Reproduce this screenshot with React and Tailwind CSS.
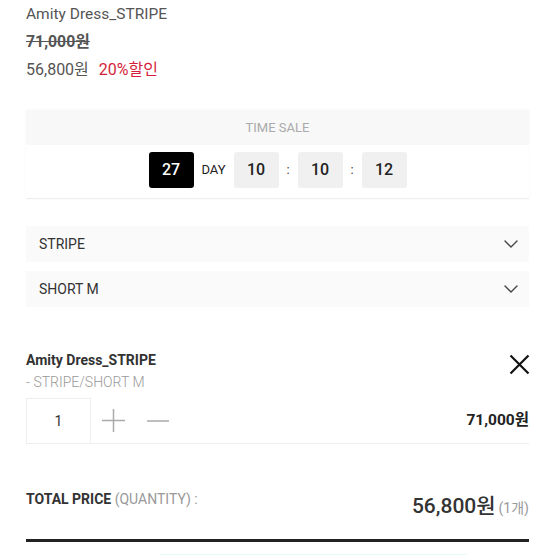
import React from "react";

const font = { fontFamily: 'Roboto, "Noto Sans CJK KR", sans-serif' };

function Chevron() {
  return (
    <svg width="14" height="8" viewBox="0 0 14 8" fill="none">
      <path d="M1 1l6 6 6-6" stroke="#444" strokeWidth="1.4" strokeLinecap="round" strokeLinejoin="round" />
    </svg>
  );
}

export default function App() {
  return (
    <div className="w-[555px] h-[555px] overflow-hidden bg-white pl-[26px] pr-[26px] text-[#333]" style={font}>
      <div className="mt-[4px] h-[20px] text-[15.5px] leading-[20px] text-[#555]">Amity Dress_STRIPE</div>
      <div className="mt-[8px] h-[20px] text-[15.8px] leading-[20px] font-bold text-[#555] line-through">71,000원</div>
      <div className="mt-[8px] h-[20px] text-[16px] leading-[20px] text-[#555] flex">
        <span>56,800원</span>
        <span className="ml-[10px] text-[#d41f3c]">20%할인</span>
      </div>

      <div className="mt-[30px] border-b border-[#eee] shadow-[0_0_3px_rgba(0,0,0,0.04)]">
        <div className="h-[35px] bg-[#f8f8f8] flex items-center justify-center text-[13px] text-[#aaa]">TIME SALE</div>
        <div className="h-[53px] pt-[7px] flex justify-center">
          <div className="flex h-[36px] items-center">
            <div className="w-[45px] h-[36px] rounded-[3px] bg-black text-white flex items-center justify-center text-[16px] font-medium">27</div>
            <div className="w-[40px] text-center text-[13px] text-[#222]">DAY</div>
            <div className="w-[45px] h-[36px] rounded-[3px] bg-[#f0f0f0] flex items-center justify-center text-[16px] font-medium text-[#222]">10</div>
            <div className="w-[19px] text-center text-[13px] text-[#444]">:</div>
            <div className="w-[45px] h-[36px] rounded-[3px] bg-[#f0f0f0] flex items-center justify-center text-[16px] font-medium text-[#222]">10</div>
            <div className="w-[19px] text-center text-[13px] text-[#444]">:</div>
            <div className="w-[45px] h-[36px] rounded-[3px] bg-[#f0f0f0] flex items-center justify-center text-[16px] font-medium text-[#222]">12</div>
          </div>
        </div>
      </div>

      <div className="mt-[27px] h-[36px] bg-[#fafafa] pl-[13px] pr-[11px] flex items-center justify-between text-[14px] text-[#333]">
        <span>STRIPE</span>
        <Chevron />
      </div>
      <div className="mt-[9px] h-[36px] bg-[#fafafa] pl-[13px] pr-[11px] flex items-center justify-between text-[14px] text-[#333]">
        <span>SHORT M</span>
        <Chevron />
      </div>

      <div className="mt-[43px] flex justify-between">
        <div>
          <div className="h-[20px] leading-[20px] text-[14px] font-bold text-[#333]">Amity Dress_STRIPE</div>
          <div className="mt-[2px] h-[20px] leading-[20px] text-[14px] font-light text-[#999]">- STRIPE/SHORT M</div>
        </div>
        <div className="mt-[4px] mr-[-1px]">
          <svg width="21" height="21" viewBox="0 0 21 21" fill="none">
            <path d="M1.5 1.5l18 18M19.5 1.5l-18 18" stroke="#111" strokeWidth="2.2" />
          </svg>
        </div>
      </div>

      <div className="mt-[6px] h-[46px] border-b border-[#eee] flex items-stretch">
        <div className="w-[65px] border-x border-t border-[#eee] flex items-center justify-center text-[14px] text-[#333]">1</div>
        <div className="ml-[11px] flex items-center">
          <svg width="23" height="23" viewBox="0 0 23 23" fill="none">
            <path d="M0 11.5h23M11.5 0v23" stroke="#aaa" strokeWidth="1.5" />
          </svg>
        </div>
        <div className="ml-[22px] flex items-center">
          <svg width="23" height="4" viewBox="0 0 23 4" fill="none">
            <path d="M0 2h22" stroke="#aaa" strokeWidth="1.5" />
          </svg>
        </div>
        <div className="ml-auto flex items-center text-[15.5px] font-bold text-[#222]">71,000원</div>
      </div>

      <div className="mt-[45px] flex justify-between items-start">
        <div className="h-[20px] leading-[20px] text-[14px]">
          <span className="font-bold text-[#333]">TOTAL PRICE</span>
          <span className="text-[#999]"> (QUANTITY) :</span>
        </div>
        <div className="mt-[3px] h-[28px] leading-[28px] flex items-baseline">
          <span className="text-[21px] font-medium text-[#333]">56,800원</span>
          <span className="ml-[3px] text-[14px] text-[#999]">(1개)</span>
        </div>
      </div>

      <div className="mt-[19px] h-[3px] bg-[#222]"></div>
      <div className="mt-[12px] ml-[133px] w-[308px] h-[2px] bg-[#e6fbf3]"></div>
    </div>
  );
}
